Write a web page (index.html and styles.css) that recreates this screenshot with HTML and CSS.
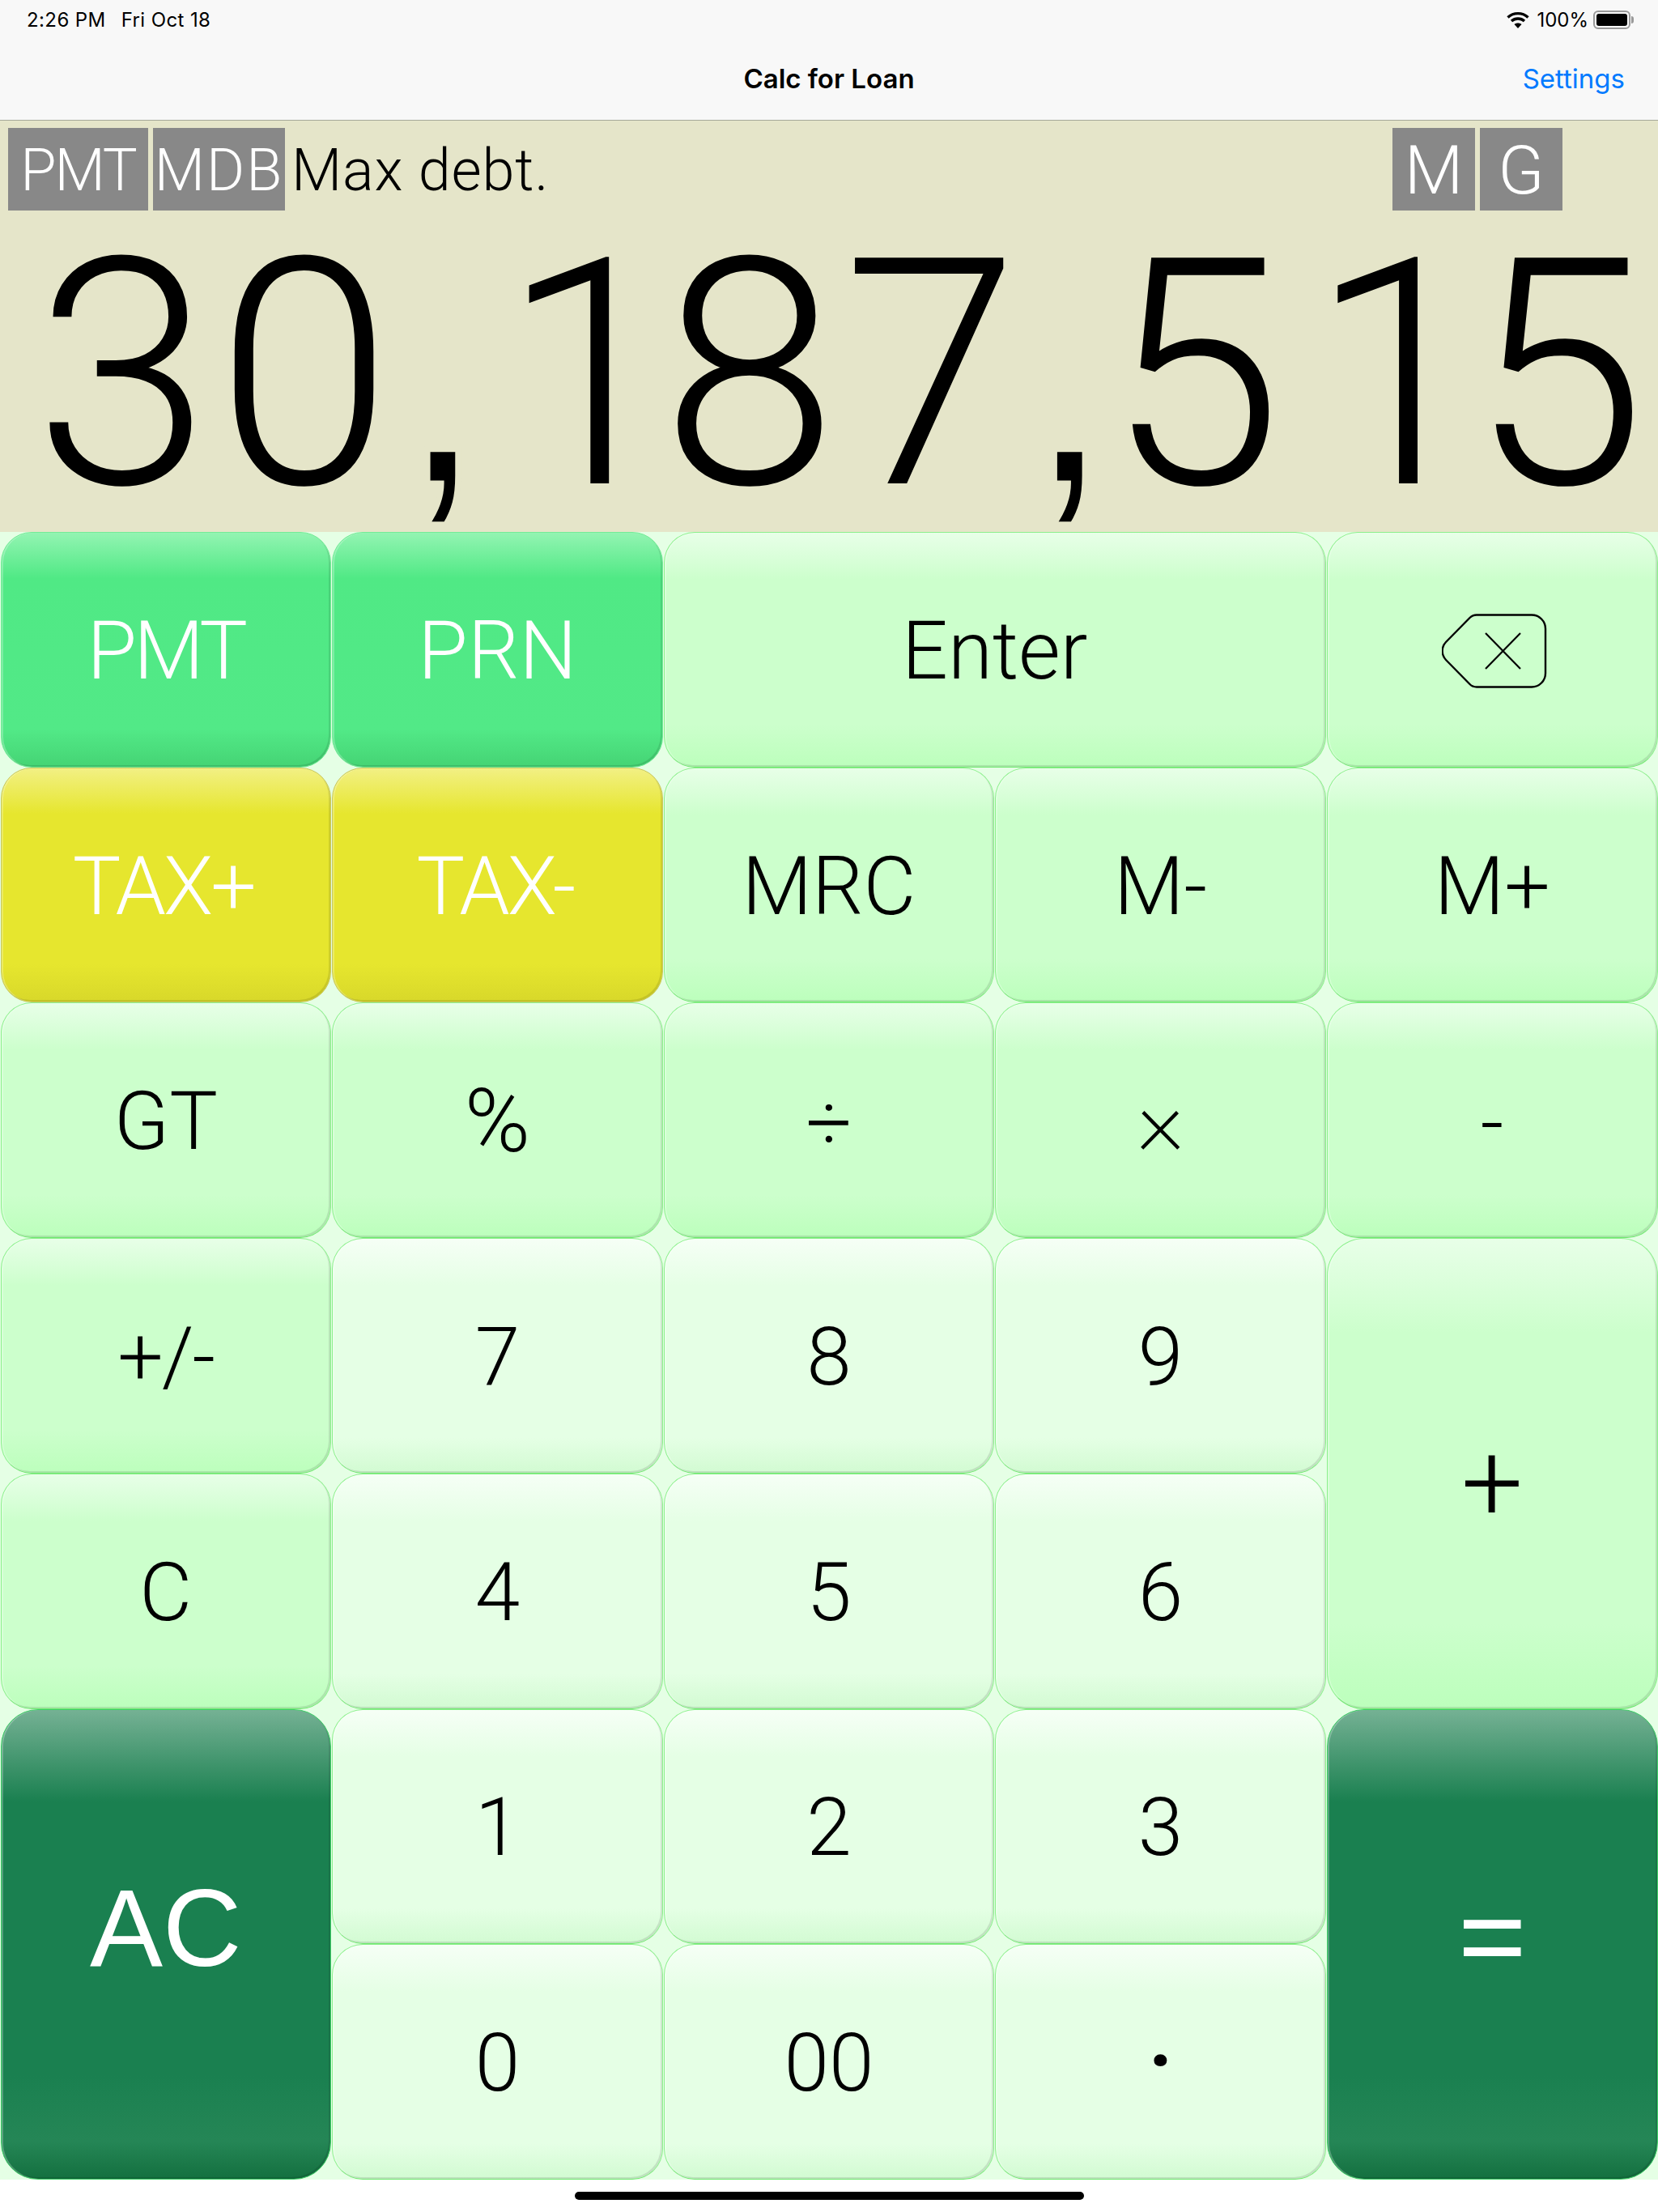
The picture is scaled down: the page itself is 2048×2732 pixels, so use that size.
FILE: index.html
```html
<!DOCTYPE html>
<html lang="en">

<head>
    <meta charset="UTF-8">
    <title>Calc for Loan</title>
    <link rel="stylesheet" href="styles.css">
</head>

<body>
    <div class="wrap">
        <!-- status bar -->
        <div class="status">
            <div class="status-left">
                <span>2:26 PM</span>
                <span>Fri Oct 18</span>
            </div>
            <div class="status-right">
                <svg class="wifi" width="28" height="21" viewBox="0 0 28 21" xmlns="http://www.w3.org/2000/svg">
                    <path d="M1.500 7.500C8.500 1 19.500 1 26.500 7.500" fill="none" stroke="#000" stroke-width="3.400" />
                    <path d="M6 12C10.500 8 17.500 8 22 12" fill="none" stroke="#000" stroke-width="3.400" />
                    <path d="M14 21L9.500 16C12 14 16 14 18.500 16z" fill="#000" />
                </svg>
                <span>100%</span>
                <span class="battery"><span class="battery-fill"></span></span>
            </div>
        </div>

        <!-- nav bar -->
        <div class="nav">
            <span></span>
            <span class="nav-title">Calc for Loan</span>
            <span class="nav-link">Settings</span>
        </div>

        <!-- display -->
        <div class="display">
            <div class="tags">
                <span class="tag tag-pmt">PMT</span>
                <span class="tag tag-mdb">MDB</span>
                <span class="tag-text">Max debt.</span>
                <span class="tag tag-m">M</span>
                <span class="tag tag-g">G</span>
            </div>
            <div class="number">
                <div>30<span class="num-comma">,</span><span class="num-one">1</span>87<span class="num-comma">,</span>5<span class="num-one">1</span>5</div>
            </div>
        </div>

        <!-- keys -->
        <div class="keys">
            <div class="key key-green key-tight">PMT</div>
            <div class="key key-green">PRN</div>
            <div class="key key-light span-2">Enter</div>
            <div class="key key-light">
                <svg class="back-icon" width="130" height="92" viewBox="0 0 130 92" xmlns="http://www.w3.org/2000/svg">
                    <path d="M43 1.500H111a17 17 0 0 1 17 17V73.500a17 17 0 0 1-17 17H43a12 12 0 0 1-8.500-3.500L5 57a16 16 0 0 1 0-22L34.500 5a12 12 0 0 1 8.500-3.500z" fill="none" stroke="#000" stroke-width="2.400" />
                    <path d="M54 24L97 68M97 24L54 68" fill="none" stroke="#000" stroke-width="2.200" />
                </svg>
            </div>

            <div class="key key-yellow key-tax">TAX+</div>
            <div class="key key-yellow key-tax">TAX-</div>
            <div class="key key-light">MRC</div>
            <div class="key key-light">M-</div>
            <div class="key key-light">M+</div>

            <div class="key key-light">GT</div>
            <div class="key key-light key-pct">%</div>
            <div class="key key-light key-op">÷</div>
            <div class="key key-light key-times">×</div>
            <div class="key key-light key-op">-</div>

            <div class="key key-light key-sign">+/-</div>
            <div class="key key-num">7</div>
            <div class="key key-num">8</div>
            <div class="key key-num">9</div>
            <div class="key key-light tall key-plus">+</div>

            <div class="key key-light">C</div>
            <div class="key key-num">4</div>
            <div class="key key-num">5</div>
            <div class="key key-num">6</div>

            <div class="key key-dark tall key-ac">AC</div>
            <div class="key key-num">1</div>
            <div class="key key-num">2</div>
            <div class="key key-num">3</div>
            <div class="key key-dark tall key-eq">=</div>

            <div class="key key-num">0</div>
            <div class="key key-num">00</div>
            <div class="key key-num key-dot">·</div>
        </div>

        <div class="home">
            <span class="home-bar"></span>
        </div>
    </div>
</body>

</html>
```

FILE: styles.css
```css
html, body {
    margin: 0;
    padding: 0;
    background: #fff;
}

.wrap {
    width: 2048px;
    height: 2732px;
    display: flex;
    flex-direction: column;
    overflow: hidden;
    font-family: Roboto, "Liberation Sans", sans-serif;
}

/* status bar */
.status {
    height: 48px;
    background: #f8f8f8;
    display: flex;
    justify-content: space-between;
    align-items: center;
    padding: 0 34px 0 33px;
    font-family: Inter, "Liberation Sans", sans-serif;
    font-size: 24px;
    color: #000;
}
.status-left {
    display: flex;
    gap: 19px;
    letter-spacing: .4px;
}
.status-right {
    display: flex;
    align-items: center;
}
.wifi {
    margin-right: 9px;
}
.battery {
    position: relative;
    width: 46px;
    height: 23px;
    margin-left: 6px;
    box-sizing: border-box;
    border: 2px solid #999;
    border-radius: 6px;
    padding: 2px;
    display: flex;
}
.battery::after {
    content: "";
    position: absolute;
    top: 5px;
    right: -6px;
    width: 3px;
    height: 9px;
    background: #999;
    border-radius: 0 3px 3px 0;
}
.battery-fill {
    flex: 1;
    background: #000;
    border-radius: 3px;
}

/* nav bar */
.nav {
    height: 101px;
    background: #f8f8f8;
    box-sizing: border-box;
    border-bottom: 1px solid #a6a899;
    display: grid;
    grid-template-columns: 1fr auto 1fr;
    align-items: center;
    padding: 0 41px 3px;
    font-family: Inter, "Liberation Sans", sans-serif;
    font-size: 33px;
}
.nav-title {
    font-weight: 600;
    color: #000;
}
.nav-link {
    text-align: right;
    color: #007aff;
}

/* display */
.display {
    height: 508px;
    background: #e5e5c9;
    display: flex;
    flex-direction: column;
}
.tags {
    display: flex;
    align-items: center;
    height: 102px;
    margin-top: 9px;
    padding: 0 118px 0 10px;
    font-weight: 300;
    font-size: 72px;
}
.tag {
    height: 102px;
    box-sizing: border-box;
    padding-top: 3px;
    background: #888;
    color: #fff;
    display: flex;
    align-items: center;
    justify-content: center;
}
.tag-pmt {
    width: 173px;
    letter-spacing: -2px;
}
.tag-mdb {
    width: 163px;
    margin-left: 6px;
    letter-spacing: 2px;
}
.tag-text {
    margin-left: 8px;
    padding-top: 3px;
    color: #000;
    letter-spacing: .8px;
}
.tag-m {
    width: 102px;
    margin-left: auto;
    font-size: 84px;
}
.tag-g {
    width: 102px;
    margin-left: 6px;
    font-size: 84px;
}
.number {
    flex: 1;
    min-height: 0;
    display: flex;
    align-items: center;
    justify-content: flex-end;
    padding: 4px 8px 0 0;
    font-weight: 300;
    font-size: 392px;
    letter-spacing: 7px;
    line-height: 1;
    color: #000;
    white-space: nowrap;
}
/* liberation comma has the long tail, bg coloured stroke thins it down */
.num-comma {
    font-family: "Liberation Sans", sans-serif;
    font-weight: 400;
    font-size: 396px;
    letter-spacing: 0;
    margin: 0 -9px 0 0;
    -webkit-text-stroke: 7px #e5e5c9;
}
.num-one {
    margin: 0 -27px 0 27px;
}

/* keys */
.keys {
    height: 2035px;
    background: #e5ffe5;
    display: grid;
    grid-template-columns: repeat(5, 1fr);
    grid-template-rows: repeat(7, 1fr);
}
.key {
    box-sizing: border-box;
    margin: 0 .5px;
    padding-top: 2px;
    border: 1px solid #8cf08c;
    border-bottom-color: #6ee86e;
    border-radius: 38px;
    display: flex;
    align-items: center;
    justify-content: center;
    font-weight: 300;
    font-size: 100px;
    color: #000;
    box-shadow: inset -2px -2px 0 rgba(0, 0, 0, .1), inset 2px 0 0 rgba(255, 255, 255, .25);
}
.span-2 {
    grid-column: span 2;
}
.tall {
    grid-row: span 2;
    border-radius: 46px;
}
.key-tight {
    letter-spacing: -4px;
}
.key-tax {
    letter-spacing: -3px;
    padding-right: 6px;
}
.key-op {
    padding-top: 6px;
}
.key-pct {
    font-size: 110px;
}
.key-sign {
    letter-spacing: -2px;
}
.key-times {
    padding: 0 0 2px;
    font-size: 115px;
    font-weight: 200;
}
.key-plus {
    grid-column: 5;
    font-size: 135px;
    padding-top: 24px;
}
.back-icon {
    margin: 2px 0 0 6px;
}
.key-light {
    background: linear-gradient(#e8ffe8 0, #ccffcc 20%, #ccffcc 82%, #bcffbc 100%);
}
.key-num {
    background: linear-gradient(#f6fff6 0, #e5ffe5 20%, #e5ffe5 85%, #d2fbd2 100%);
}
.key-green {
    color: #fff;
    background: linear-gradient(#93f4b2 0, #50e985 19.500%, #52e987 84%, #45d474 100%);
    border-color: #74ec97;
}
.key-yellow {
    color: #fff;
    background: linear-gradient(#f2f084 0, #e6e62e 19.500%, #e6e62e 84%, #d8d82a 100%);
    border-color: #c8c860;
}
.key-dark {
    color: #fff;
    background: linear-gradient(#75b194 0, #1a8050 19.500%, #1a8050 78%, #258656 92%, #14703f 100%);
    border-color: #3fd067;
}
.key-ac {
    grid-column: 1;
    padding: 0 0 40px;
    font-weight: 400;
    font-size: 135px;
    font-family: "Liberation Sans", sans-serif;
}
.key-eq {
    grid-column: 5;
    padding: 0 0 18px;
    font-weight: 300;
    font-size: 168px;
    -webkit-text-stroke: 2px #fff;
}
.key-dot {
    padding: 0 0 4px;
    font-weight: 700;
    font-size: 100px;
}

/* home indicator */
.home {
    flex: 1;
    background: #fff;
    display: flex;
    justify-content: center;
    padding-top: 15px;
}
.home-bar {
    width: 629px;
    height: 10px;
    background: #000;
    border-radius: 5px;
}
```
